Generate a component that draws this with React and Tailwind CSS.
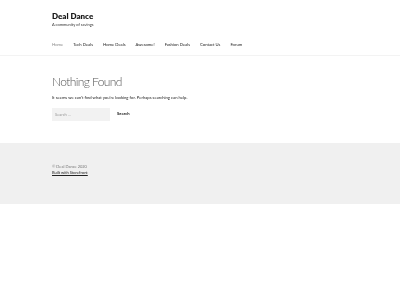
import React from 'react';

const navItems = ['Home', 'Tech Deals', 'Home Deals', 'Awesome!', 'Fashion Deals', 'Contact Us', 'Forum'];

const App = () => {
  return (
    <div className="min-h-[300px] bg-white font-['Lato',sans-serif] text-[#222] antialiased grayscale">
      <header className="h-[56px] border-b border-[#f3f3f3] px-[52px] pt-[11px]">
        <div className="text-[8px] font-extrabold leading-[11px] text-[#1a1a1a]">Deal Dance</div>
        <div className="text-[4px] leading-[5px] text-[#333]">A community of savings</div>
        <nav className="mt-[15px] flex gap-[10px] text-[4.2px] leading-[6px]">
          {navItems.map((item, i) => (
            <span key={item} className={i === 0 ? 'text-[#888]' : 'text-[#222]'}>
              {item}
            </span>
          ))}
        </nav>
      </header>

      <main className="px-[52px] pt-[18px] pb-[22px]">
        <h1 className="text-[12px] font-light leading-[15px] tracking-[-0.6px] text-[#555]">Nothing Found</h1>
        <p className="mt-[6px] text-[4.2px] leading-[6px] text-[#222]">
          It seems we can’t find what you’re looking for. Perhaps searching can help.
        </p>
        <form className="mt-[7px] flex items-center gap-[7px]" onSubmit={(e) => e.preventDefault()}>
          <input
            type="search"
            placeholder="Search …"
            className="h-[13px] w-[58px] bg-[#f2f2f2] px-[3px] text-[4px] text-[#666] placeholder:text-[#999] outline-none"
          />
          <button type="submit" className="text-[4.2px] font-bold text-[#222]">
            Search
          </button>
        </form>
      </main>

      <footer className="h-[61px] bg-[#f0f0f0] px-[52px] pt-[20px]">
        <div className="text-[4px] leading-[7px] text-[#777]">© Deal Dance 2020</div>
        <div className="text-[4px] leading-[6px]">
          <a href="#" className="text-[#222] underline">
            Built with Storefront
          </a>
        </div>
      </footer>
    </div>
  );
};

export default App;
